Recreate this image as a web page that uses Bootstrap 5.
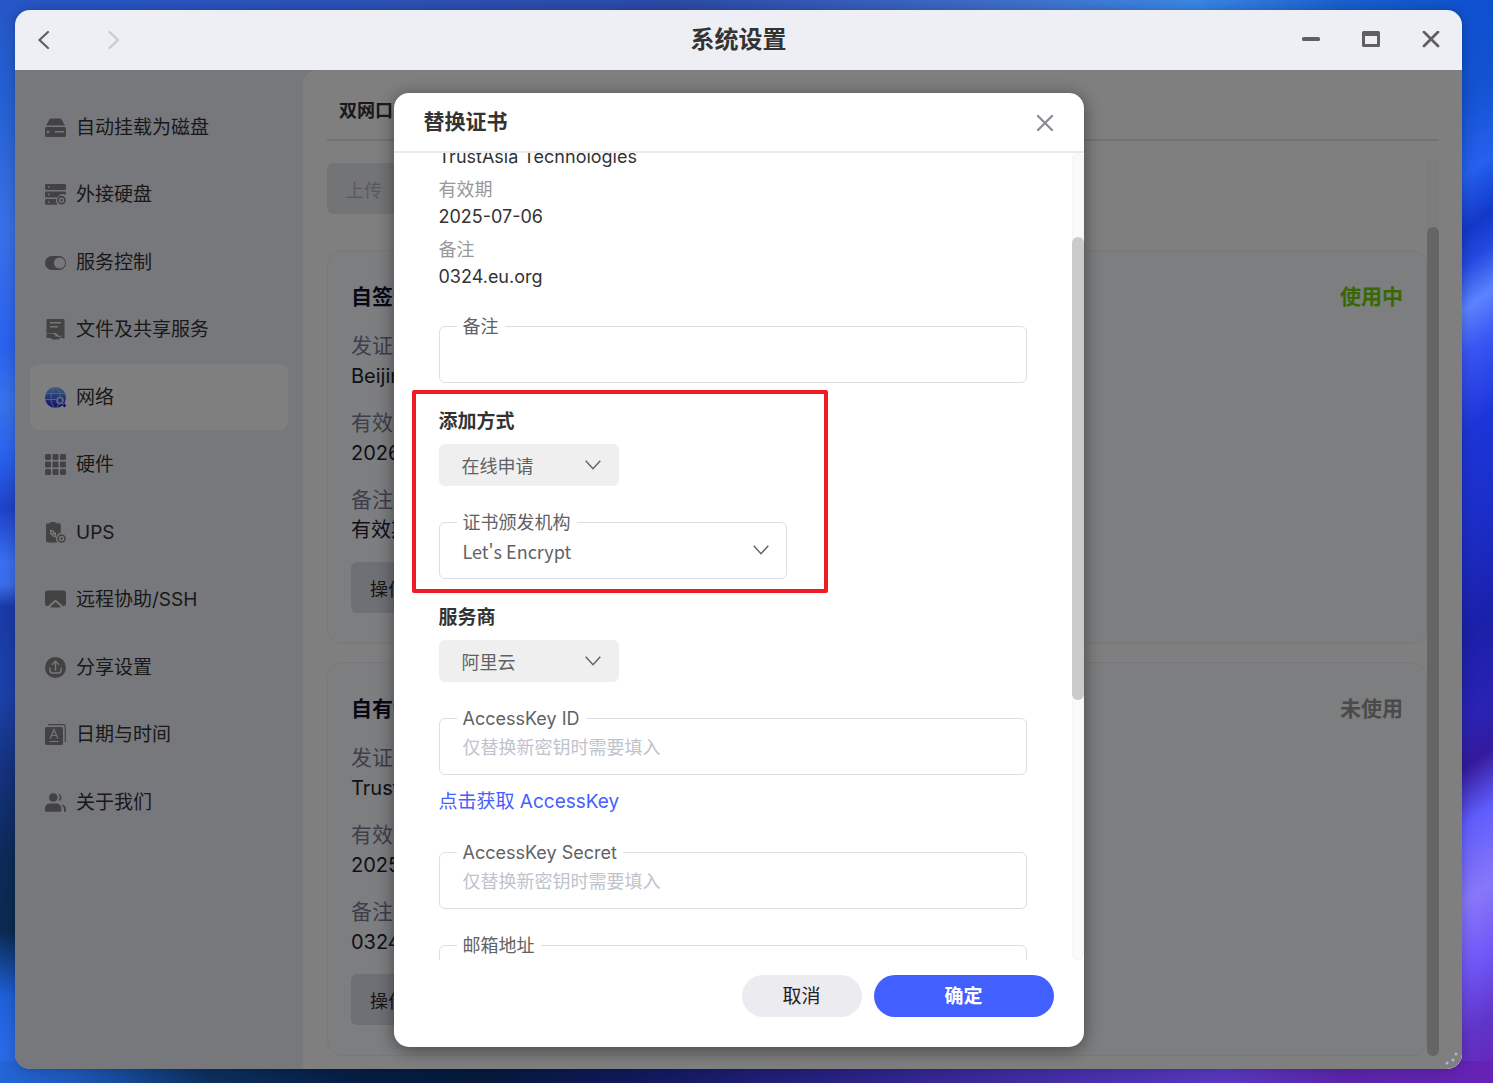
<!DOCTYPE html>
<html lang="zh-CN">
<head>
<meta charset="utf-8">
<meta name="viewport" content="width=device-width, initial-scale=1">
<title>系统设置</title>
<link href="https://cdn.jsdelivr.net/npm/bootstrap@5.3.0/dist/css/bootstrap.min.css" rel="stylesheet">
<style>
  :root { --sans: Inter, "Noto Sans CJK SC", sans-serif; --han: "Noto Sans CJK SC", sans-serif; }
  body {
    font-family: var(--sans); font-size: 18px; line-height: 27px; color: #333;
    height: 100vh; min-height: 700px; padding: 10px 31px 14px 15px; overflow: hidden;
    background:
      linear-gradient(90deg, #2656c8 0, #2d52b8 25%, #2c4aa8 45%, #4070cc 68%, #3a88e6 80%, #1a60d0 90%, #0d4fcf 100%) top / 100% 18px no-repeat,
      linear-gradient(90deg, #2465d8 0, #1d58b8 5%, #0c2f5e 14%, #061d44 24%, #051a3c 32%, #10185a 42%, #26217f 55%, #3e2ca0 68%, #5838c0 82%, #5a25a8 90%, #6622b6 100%) bottom / 100% 22px no-repeat,
      linear-gradient(180deg, #2656c8 0, #2460d2 9%, #3a70e6 21%, #2a62ee 32%, #3872ea 37%, #2a62ee 42%, #1f42c8 47%, #3a6ff0 52%, #3a6cea 54%, #1a3aa8 56%, #1c40a8 64%, #15327f 71%, #0c2a58 79%, #0a2a50 86%, #1f5fd8 92%, #2a6ae8 97%, #2465d8 100%) left / 30px 100% no-repeat,
      linear-gradient(145deg, #0d50d0 0, #1352d0 10%, #2560ee 17%, #1238c8 22%, #2448e0 25%, #5c84ff 29%, #3a56f4 33%, #1c35d8 40%, #1b2cc4 50%, #1a20a8 58%, #2a22b4 66%, #341a9c 70%, #5f5cfc 75%, #8878f8 82%, #7058f8 88%, #6035c8 94%, #6622b6 100%) right / 50px 100% no-repeat,
      #2456c8;
  }
  button, input, select { font-family: inherit; }
  .app-window { border-radius: 15px; overflow: hidden; box-shadow: 0 0 12px rgba(0,0,0,.25); }
  .title-bar { height: 60px; background: #eeeff5; padding: 0 22px; }
  .title-bar h1 { font-size: 24px; line-height: 36px; font-weight: 700; }
  .glyph-btn { width: 18px; height: 18px; padding: 0; border: 0; background: none; display: block; color: #5f5f5f; }
  .glyph-btn svg { display: block; width: 18px; height: 18px; }
  .app-body { background: #eef0f8; min-height: 0; }
  .side { flex: 0 0 288px; padding: 24px 15px; }
  .side-list { height: 741px; }
  .side-link { height: 66px; padding: 0 15px; gap: 10px; border-radius: 9px; color: #333; font-size: 19px; font-weight: 400; text-decoration: none; }
  .side-link.active { background: #fff; }
  .side-link svg { width: 21px; height: 21px; flex: none; color: #858585; fill: currentColor; }
  .panel { background: #fff; border-top-left-radius: 15px; padding: 0 23px 13px 24px; }
  .tab-strip { height: 71px; padding: 15px 12px 0; border-bottom: 2px solid #e6e6e8; }
  .tab-btn { border: 0; background: none; padding: 12px 0; font-weight: 700; line-height: 27px; color: #333; }
  .list-area { margin-top: 18px; min-height: 0; }
  .soft-btn { height: 51px; border: 0; border-radius: 6px; padding: 3px 19px 0; background: #dfe1ea; color: #2b2b2b; line-height: 27px; }
  .soft-btn:disabled { background: #e6e8ed; color: #b4b4b8; }
  .list-scroll { padding-top: 4px; overflow: hidden; }
  .cert { background: #fafcff; border: 1px solid #eef1f6; border-radius: 15px; padding: 31px 23px 30px; flex: none; }
  .cert h2, .cert-state { font-size: 21px; line-height: 30px; font-weight: 700; margin: 0; }
  .cert h2 { color: #101030; }
  .cert-state { color: #949494; }
  .cert-state.on { color: #6fd005; }
  .cert dl { font-size: 20px; line-height: 30px; margin: 19px 0 17px; }
  .cert dt { font-size: 21px; font-weight: 400; color: #7c7c98; }
  .cert dd { margin: 0 0 17px; color: #1e1e34; }
  .cert dd:last-child { margin: 0; }
  .cert-gap { margin-top: 36px; }
  .cert + .cert { margin-top: 18px; }
  .rail { width: 12px; flex: none; border-radius: 6px; background: #fafafa; box-shadow: inset 0 0 4px rgba(0,0,0,.04); }
  .rail-thumb { width: 12px; border-radius: 6px; background: #cbcbcb; }
  .shade { background: rgba(0,0,0,.5); z-index: 2; }
  .dialog-box { width: 690px; max-width: 100%; height: calc(100% - 45px); background: #fff; border-radius: 15px; box-shadow: 0 3px 18px rgba(0,0,0,.45); overflow: hidden; }
  .dialog-head { height: 60px; flex: none; padding: 0 30px; border-bottom: 2px solid #ebebed; }
  .dialog-head h2 { font-size: 21px; line-height: 30px; font-weight: 700; margin: 0; }
  .dialog-head .glyph-btn { color: #8a8b94; }
  .dialog-main { min-height: 0; }
  .dialog-scroll { overflow: hidden; padding: 0 45px; }
  .facts { margin: -10px 0 36px; }
  .facts dt { font-weight: 400; color: #999; }
  .facts dd { margin: 0 0 6px; color: #333; }
  .facts dd:last-child { margin: 0; }
  .field-box { position: relative; }
  .field-box label { position: absolute; left: 18px; top: -13px; padding: 0 6px; background: #fff; color: #606266; z-index: 1; }
  .field-box .form-control, .field-box .form-select { height: 57px; border: 1px solid #dddde6; border-radius: 6px; padding: 2px 23px 0; font-size: 18px; line-height: 27px; color: #606266; background-color: #fff; }
  .field-box .form-control::placeholder { color: #bfc3cc; opacity: 1; }
  .form-select { background-image: url("data:image/svg+xml,%3Csvg xmlns='http://www.w3.org/2000/svg' viewBox='0 0 16 10'%3E%3Cpath d='M.7.7 8 8.700 15.300.7' fill='none' stroke='%23606266' stroke-width='1.400'/%3E%3C/svg%3E") !important; background-size: 16px 10px; background-position: right 18px center; }
  .field-box .form-select { font-family: var(--han); background-position: right 17px center; }
  .pick { width: 180px; height: 42px; border: 0; border-radius: 6px; padding: 3px 23px 0; font-size: 18px; line-height: 27px; color: #606266; background-color: #efefef; }
  .part-title { font-size: 19px; line-height: 28px; font-weight: 700; margin: 0 0 8px; display: block; }
  .part-gap { margin-top: 25px; }
  .field-gap { margin-top: 36px; }
  .issuer { width: 348px; position: relative; }
  .issuer::after { content: ""; position: absolute; inset: -18px -41px -14px -27px; border: 4px solid #f01c24; border-radius: 2px; pointer-events: none; z-index: 2; }
  .key-link { display: inline-block; margin-top: 13px; font-size: 19px; line-height: 28px; color: #4560ff; text-decoration: none; }
  .dialog-foot { flex: none; padding: 15px 30px 30px; gap: 12px; }
  .pill { height: 42px; border: 0; border-radius: 21px; font-size: 19px; line-height: 28px; padding: 3px 0 0; }
  .pill-cancel { width: 120px; background: #ecebf0; color: #222; }
  .pill-ok { width: 180px; background: #425fff; color: #fff; font-weight: 700; }
  .grip { position: absolute; right: 3px; bottom: 3px; width: 14px; height: 14px; z-index: 3; }
</style>
</head>
<body>
<div class="app-window d-flex flex-column h-100 position-relative">
  <header class="title-bar d-flex align-items-center flex-shrink-0">
    <div class="d-flex flex-fill w-100" style="gap:52px">
      <button class="glyph-btn" type="button" aria-label="后退"><svg viewBox="0 0 18 18" fill="none" stroke="currentColor" stroke-width="2.200" stroke-linecap="round"><path d="m11 1-8.500 8L11 17"/></svg></button>
      <button class="glyph-btn" type="button" aria-label="前进" disabled style="color:#cbcbcb"><svg viewBox="0 0 18 18" fill="none" stroke="currentColor" stroke-width="2.200" stroke-linecap="round"><path d="m2.500 1 8.500 8-8.500 8"/></svg></button>
    </div>
    <h1 class="m-0 text-nowrap">系统设置</h1>
    <div class="d-flex flex-fill w-100 justify-content-end" style="gap:42px">
      <button class="glyph-btn" type="button" aria-label="最小化"><svg viewBox="0 0 18 18"><rect y="6" width="18" height="4" rx="1.500" fill="currentColor"/></svg></button>
      <button class="glyph-btn" type="button" aria-label="最大化"><svg viewBox="0 0 18 18"><path fill="currentColor" fill-rule="evenodd" d="M1.500 0h15A1.500 1.500 0 0 1 18 1.500v13a1.500 1.500 0 0 1-1.500 1.500h-15A1.500 1.500 0 0 1 0 14.500v-13A1.500 1.500 0 0 1 1.500 0ZM3 5v8h12V5Z"/></svg></button>
      <button class="glyph-btn" type="button" aria-label="关闭"><svg viewBox="0 0 18 18" fill="none" stroke="currentColor" stroke-width="2.800" stroke-linecap="round"><path d="m2 1 14 14M16 1 2 15"/></svg></button>
    </div>
  </header>

  <div class="app-body d-flex flex-fill position-relative">
    <nav class="side">
      <div class="side-list d-flex flex-column justify-content-between">
        <a class="side-link d-flex align-items-center" href="#"><svg viewBox="0 0 21 21"><path d="M5.500 1.500h10a1 1 0 0 1 .8.400L20 8.500H1L4.700 1.900a1 1 0 0 1 .8-.4Z"/><path fill-rule="evenodd" d="M1.500 10h18A1.500 1.500 0 0 1 21 11.500v7a1.500 1.500 0 0 1-1.500 1.500h-18A1.500 1.500 0 0 1 0 18.500v-7A1.500 1.500 0 0 1 1.500 10ZM3 13.500a1.400 1.400 0 1 0 .01 0ZM10 14v1.400h9V14Z"/></svg>自动挂载为磁盘</a>
        <a class="side-link d-flex align-items-center" href="#"><svg viewBox="0 0 21 21"><path fill-rule="evenodd" d="M1 0h19a1 1 0 0 1 1 1v4a1 1 0 0 1-1 1H1a1 1 0 0 1-1-1V1a1 1 0 0 1 1-1Zm2 2.200v1.500h1.500V2.200ZM1 7.500h19a1 1 0 0 1 1 1v2.300a6 6 0 0 0-8.500 2.700H1a1 1 0 0 1-1-1v-4a1 1 0 0 1 1-1Zm2 2.200v1.500h1.500V9.700ZM1 15h10.200a6 6 0 0 0 1.400 5.700H1a1 1 0 0 1-1-1V16a1 1 0 0 1 1-1Zm2 2.200v1.500h1.500v-1.500Z"/><circle cx="16.500" cy="16.200" r="3.500" fill="none" stroke="currentColor" stroke-width="1.700"/><circle cx="16.500" cy="16.200" r="1.300"/></svg>外接硬盘</a>
        <a class="side-link d-flex align-items-center" href="#"><svg viewBox="0 0 21 21"><path fill-rule="evenodd" d="M7 4h7a7 7 0 0 1 0 14H7A7 7 0 0 1 7 4Zm7.500 1.500a5.500 5.500 0 1 0 .01 0Z"/></svg>服务控制</a>
        <a class="side-link d-flex align-items-center" href="#"><svg viewBox="0 0 21 21"><path fill-rule="evenodd" d="M2.500 0h16a1 1 0 0 1 1 1v18.500l-4-.5 2-2.500-3.500.5-3-3H1.500V1a1 1 0 0 1 1-1ZM5 3v1.500h11V3Zm0 4v1.500h8V7Z"/><path d="M1.500 14.500H8l3 2.500H8.500l6 1 3-1-4 3.500H8L5 19H1.500Z"/></svg>文件及共享服务</a>
        <a class="side-link active d-flex align-items-center" href="#" aria-current="page"><svg viewBox="0 0 21 21"><defs><linearGradient id="net" x1="0" y1="0" x2="0" y2="1"><stop stop-color="#78b8f0"/><stop offset=".5" stop-color="#4a6cf0"/><stop offset="1" stop-color="#2020c8"/></linearGradient></defs><circle cx="10.500" cy="10.500" r="10.500" fill="url(#net)"/><g fill="none" stroke="#a4c4f8" stroke-width="1"><ellipse cx="10.500" cy="10.500" rx="4.500" ry="10.300"/><path d="M1 6.500h19M0 12.500h11"/></g><circle cx="15" cy="13.500" r="3" fill="#4a58f0" stroke="#c8d6ff" stroke-width="1.700"/><path d="m17 16 3.500 3.500" stroke="#2a28d0" stroke-width="3"/><path d="m16.500 15.500 2 2" stroke="#c8d6ff" stroke-width="1.500"/></svg>网络</a>
        <a class="side-link d-flex align-items-center" href="#"><svg viewBox="0 0 21 21"><g id="r3"><rect width="6" height="6" rx="1.300"/><rect x="7.500" width="6" height="6" rx="1.300"/><rect x="15" width="6" height="6" rx="1.300"/></g><use href="#r3" y="7.500"/><use href="#r3" y="15"/></svg>硬件</a>
        <a class="side-link d-flex align-items-center" href="#"><svg viewBox="0 0 21 21"><path fill-rule="evenodd" d="M5.500 0h5v1.200H14a1.800 1.800 0 0 1 1.800 1.800v7.800a5.800 5.800 0 0 0-3.300 9.700H2.800A1.800 1.800 0 0 1 1 18.700V3a1.800 1.800 0 0 1 1.800-1.800h2.700ZM5 7.500v4.700l2 .6v1.400l4 1.300v-4.800l-2-.6V8.800ZM6.300 9.300l1.500.5v1.800l-1.500-.5Zm1.900 2.800 1.500.5v1.500l-1.500-.5Z"/><circle cx="16.500" cy="16.500" r="3.500" fill="none" stroke="currentColor" stroke-width="1.600"/><circle cx="16.500" cy="16.500" r="1.200"/></svg>UPS</a>
        <a class="side-link d-flex align-items-center" href="#"><svg viewBox="0 0 21 21"><path d="M2.500 1.500h16A2.500 2.500 0 0 1 21 4v10.500a2.500 2.500 0 0 1-2.500 2.500H18l-7.500-6.500L3 17h-.5A2.500 2.500 0 0 1 0 14.500V4a2.500 2.500 0 0 1 2.500-2.500Z"/><path d="m10.500 13 5 4.500a.6.600 0 0 1-.4 1H6a.6.600 0 0 1-.4-1Z"/></svg>远程协助/SSH</a>
        <a class="side-link d-flex align-items-center" href="#"><svg viewBox="0 0 21 21"><circle cx="10.500" cy="10.500" r="10.500"/><path d="M10.500 13.500V4.500M7 7.800l3.500-3.500L14 7.800M5 10.500v3a2.500 2.500 0 0 0 2.500 2.500h6a2.500 2.500 0 0 0 2.500-2.500v-3" fill="none" stroke="#eeeff7" stroke-width="1.400"/></svg>分享设置</a>
        <a class="side-link d-flex align-items-center" href="#"><svg viewBox="0 0 21 21"><rect y="3" width="18" height="18" rx="1.800"/><path d="M3 .7h15.500a1.800 1.800 0 0 1 1.800 1.800V18" fill="none" stroke="currentColor" stroke-width="1.200"/><path d="m5.200 14.500 3.800-9 3.800 9M6.500 11.500h5M4.500 17.500h9" fill="none" stroke="#eeeff7" stroke-width="1.200"/></svg>日期与时间</a>
        <a class="side-link d-flex align-items-center" href="#"><svg viewBox="0 0 21 21"><circle cx="8.300" cy="5.500" r="4.300"/><path d="M5 11.500h6.500a4.800 4.800 0 0 1 4.800 4.800v2.500a1 1 0 0 1-1 1H1a1 1 0 0 1-1-1v-2.500a4.800 4.800 0 0 1 5-4.800ZM13.500 1.500a4.200 4.200 0 0 1 1.200 7.500l-1-1.200a3 3 0 0 0 0-4.800ZM17.300 12.500A5 5 0 0 1 21 17v2.800h-2V17a5 5 0 0 0-2.500-3.700Z"/></svg>关于我们</a>
      </div>
    </nav>

    <main class="panel d-flex flex-column flex-fill">
      <div class="tab-strip flex-shrink-0"><button class="tab-btn" type="button">双网口</button></div>
      <div class="list-area d-flex flex-fill">
        <div class="list-scroll d-flex flex-column flex-fill">
          <div class="d-flex flex-shrink-0"><button class="soft-btn" type="button" disabled>上传</button></div>
          <section class="cert cert-gap">
            <div class="d-flex justify-content-between"><h2>自签证书</h2><span class="cert-state on">使用中</span></div>
            <dl><dt>发证者</dt><dd>Beijing</dd><dt>有效期</dt><dd>2026</dd><dt>备注</dt><dd>有效期</dd></dl>
            <button class="soft-btn" type="button">操作</button>
          </section>
          <section class="cert">
            <div class="d-flex justify-content-between"><h2>自有证书</h2><span class="cert-state">未使用</span></div>
            <dl><dt>发证者</dt><dd>TrustAsia</dd><dt>有效期</dt><dd>2025-07-06</dd><dt>备注</dt><dd>0324.eu.org</dd></dl>
            <button class="soft-btn" type="button">操作</button>
          </section>
        </div>
        <div class="rail d-flex flex-column justify-content-end"><div class="rail-thumb" style="height:92.4%"></div></div>
      </div>
    </main>

    <div class="shade position-absolute top-0 start-0 w-100 h-100 d-flex align-items-center justify-content-center">
      <div class="dialog-box d-flex flex-column" role="dialog" aria-modal="true" aria-labelledby="dlgTitle">
        <div class="dialog-head d-flex align-items-center justify-content-between">
          <h2 id="dlgTitle">替换证书</h2>
          <button class="glyph-btn" type="button" aria-label="关闭"><svg viewBox="0 0 18 18" fill="none" stroke="currentColor" stroke-width="2.300" stroke-linecap="round"><path d="m2 3 14 14M16 3 2 17"/></svg></button>
        </div>
        <div class="dialog-main d-flex flex-fill">
          <form class="dialog-scroll flex-fill">
            <dl class="facts"><dd>TrustAsia Technologies</dd><dt>有效期</dt><dd>2025-07-06</dd><dt>备注</dt><dd>0324.eu.org</dd></dl>
            <div class="field-box"><label for="note">备注</label><input class="form-control" id="note" type="text"></div>
            <div class="issuer part-gap">
              <label class="part-title" for="mode">添加方式</label>
              <select class="form-select pick" id="mode"><option>在线申请</option></select>
              <div class="field-box field-gap"><label for="ca">证书颁发机构</label><select class="form-select" id="ca"><option>Let's Encrypt</option></select></div>
            </div>
            <div class="part-gap">
              <label class="part-title" for="vendor">服务商</label>
              <select class="form-select pick" id="vendor"><option>阿里云</option></select>
            </div>
            <div class="field-box field-gap"><label for="akid">AccessKey ID</label><input class="form-control" id="akid" type="text" placeholder="仅替换新密钥时需要填入"></div>
            <a class="key-link" href="#">点击获取 AccessKey</a>
            <div class="field-box field-gap"><label for="aksec">AccessKey Secret</label><input class="form-control" id="aksec" type="text" placeholder="仅替换新密钥时需要填入"></div>
            <div class="field-box field-gap"><label for="mail">邮箱地址</label><input class="form-control" id="mail" type="email"></div>
          </form>
          <div class="rail"><div style="height:10.5%"></div><div class="rail-thumb" style="height:57.3%"></div></div>
        </div>
        <div class="dialog-foot d-flex justify-content-end">
          <button class="pill pill-cancel" type="button">取消</button>
          <button class="pill pill-ok" type="submit">确定</button>
        </div>
      </div>
    </div>
  </div>
  <svg class="grip" viewBox="0 0 14 14" fill="#aab4e6" aria-hidden="true"><circle cx="2" cy="11" r="1.500"/><circle cx="8" cy="8" r="1.500"/><circle cx="11" cy="2" r="1.500"/></svg>
</div>
<script src="https://cdn.jsdelivr.net/npm/bootstrap@5.3.0/dist/js/bootstrap.bundle.min.js"></script>
</body>
</html>
